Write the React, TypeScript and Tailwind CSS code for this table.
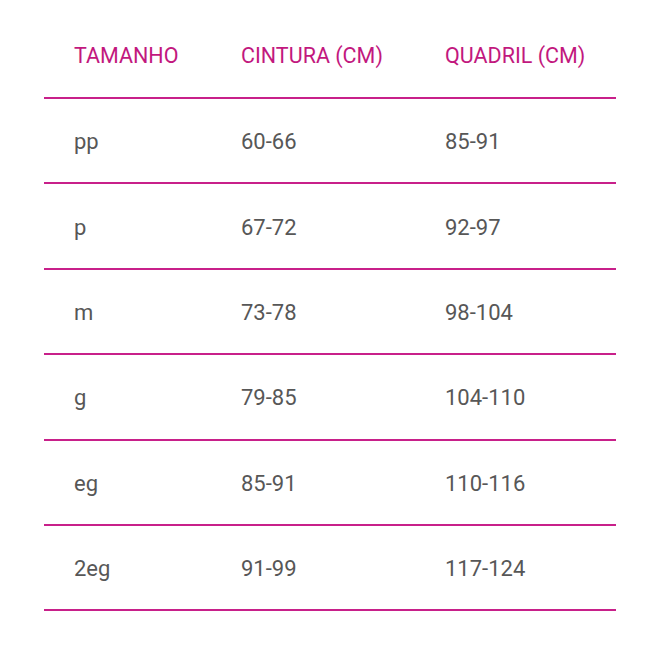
import React from "react";

const rows = [
  ["pp", "60-66", "85-91"],
  ["p", "67-72", "92-97"],
  ["m", "73-78", "98-104"],
  ["g", "79-85", "104-110"],
  ["eg", "85-91", "110-116"],
  ["2eg", "91-99", "117-124"],
];

export default function App() {
  return (
    <div className="w-[660px] h-[660px] bg-white pt-[13px] pl-[44px]" style={{ fontFamily: "Roboto, 'Liberation Sans', sans-serif" }}>
      <div className="w-[572px]">
        <div className="grid grid-cols-[167px_204px_201px] h-[86px] items-center pt-[2px] border-b-2 border-[#c8208a] text-[21.5px] text-[#c2187e]">
          <div className="pl-[30px]">TAMANHO</div>
          <div className="pl-[30px]">CINTURA (CM)</div>
          <div className="pl-[30px]">QUADRIL (CM)</div>
        </div>
        {rows.map((r) => (
          <div key={r[0]} className="grid grid-cols-[167px_204px_201px] h-[85.4px] items-center pt-[2px] border-b-2 border-[#c8208a] text-[22px] text-[#575757]">
            <div className="pl-[30px]">{r[0]}</div>
            <div className="pl-[30px]">{r[1]}</div>
            <div className="pl-[30px]">{r[2]}</div>
          </div>
        ))}
      </div>
    </div>
  );
}
